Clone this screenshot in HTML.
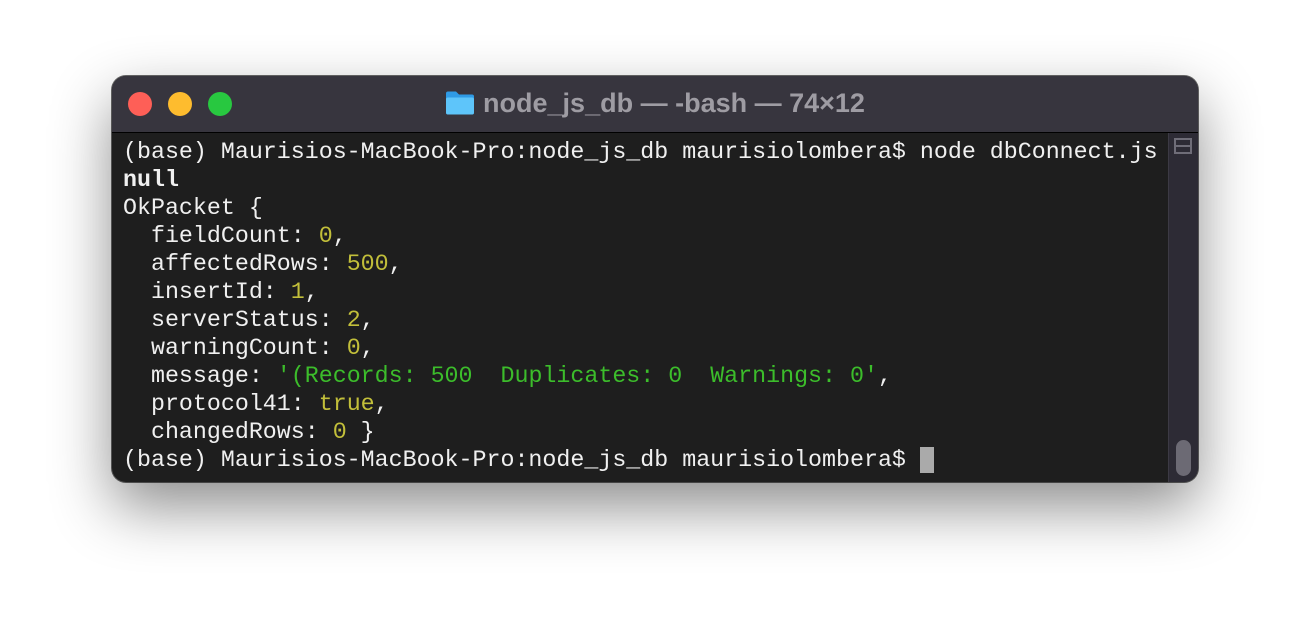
<!DOCTYPE html>
<html><head><meta charset="utf-8"><style>
body{margin:0;width:1310px;height:630px;background:#fff;position:relative;overflow:hidden;font-family:"Liberation Sans",sans-serif}
.win{position:absolute;left:112px;top:76px;width:1086px;height:406px;border-radius:14px;background:#1e1e1e;box-shadow:0 25px 60px rgba(0,0,0,.45),0 0 0 1px #6a6a6a;overflow:hidden}
.tb{position:absolute;left:0;top:0;width:100%;height:56px;background:#37353e;border-bottom:1px solid #000}
.d{position:absolute;top:16px;width:24px;height:24px;border-radius:50%}
.title{position:absolute;left:0;right:0;top:12px;text-align:center;color:#9e9ca3;font-weight:bold;font-size:27px}
.sb{position:absolute;right:0;top:57px;width:29px;bottom:0;background:#2d2b35;border-left:1px solid #3c3a44}
.term{position:absolute;left:11px;top:62px;font-family:"Liberation Mono",monospace;font-size:23.3px;line-height:28px;color:#f0f0f0;white-space:pre}
.y{color:#c2bf3a}.g{color:#3cbd2b}
</style></head><body>
<div class="win">
 <div class="tb">
  <div class="d" style="left:16px;background:#fe5f57"></div>
  <div class="d" style="left:56px;background:#febc2e"></div>
  <div class="d" style="left:96px;background:#28c840"></div>
  <div class="title"><svg width="30" height="27" viewBox="0 0 30 26" style="vertical-align:-4px;margin-right:8px"><path d="M1 4a2 2 0 0 1 2-2h8l3 3h13a2 2 0 0 1 2 2v16a2 2 0 0 1-2 2H3a2 2 0 0 1-2-2z" fill="#2f9be6"/><rect x="1" y="8" width="28" height="17" rx="2" fill="#5ec5fa"/></svg>node_js_db — -bash — 74×12</div>
 </div>
 <div class="sb">
  <div style="position:absolute;left:5px;top:5px;width:18px;height:16px;border:2px solid #6f6d78;box-sizing:border-box"></div>
  <div style="position:absolute;left:5px;top:12px;width:18px;height:2px;background:#6f6d78"></div>
  <div style="position:absolute;left:7px;bottom:6px;width:15px;height:36px;border-radius:8px;background:#6c6a74"></div>
 </div>
 <div class="term">(base) Maurisios-MacBook-Pro:node_js_db maurisiolombera$ node dbConnect.js
<b>null</b>
OkPacket {
  fieldCount: <span class="y">0</span>,
  affectedRows: <span class="y">500</span>,
  insertId: <span class="y">1</span>,
  serverStatus: <span class="y">2</span>,
  warningCount: <span class="y">0</span>,
  message: <span class="g">'(Records: 500  Duplicates: 0  Warnings: 0'</span>,
  protocol41: <span class="y">true</span>,
  changedRows: <span class="y">0</span> }
(base) Maurisios-MacBook-Pro:node_js_db maurisiolombera$ <span style="background:#aaa">&nbsp;</span></div>
</div>
</body></html>
